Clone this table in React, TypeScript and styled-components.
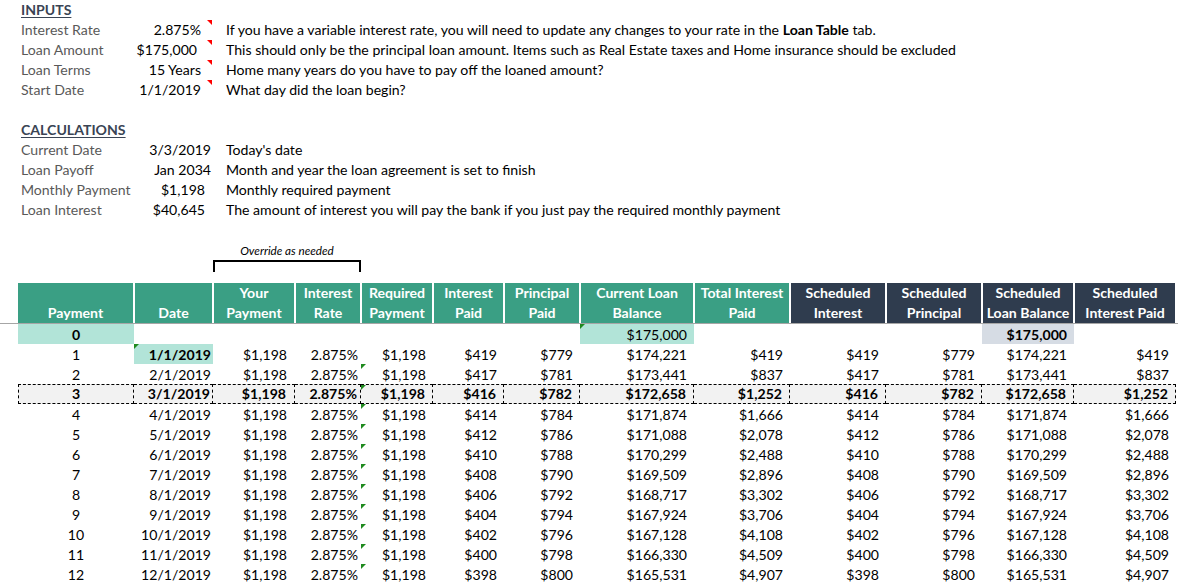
import React from "react";
import styled, { createGlobalStyle, css } from "styled-components";

const GlobalStyle = createGlobalStyle`
  html, body { margin: 0; padding: 0; background: #ffffff; }
  body {
    font-family: Lato, "Noto Sans", sans-serif;
    font-size: 14.1px;
    color: #000000;
  }
`;

const COLS =
  "18px 116px 79px 82px 66px 72px 71px 76px 114px 96px 96px 96px 92px 102px";

const TEAL = "#3a9f84";
const NAVY = "#2f3c4e";
const LIGHT_TEAL = "#b2e4d8";
const LIGHT_SLATE = "#d6dce4";

const Page = styled.div`
  width: 1178px;
  overflow: hidden;
`;

/* ---------- top info section ---------- */

const InfoRow = styled.div`
  display: grid;
  grid-template-columns: 18px 116px 79px 1fr;
  height: 20px;
  line-height: 20px;
  white-space: nowrap;
`;

const Title = styled.div`
  grid-column: 2 / span 2;
  padding-left: 3px;
  font-weight: 700;
  text-decoration: underline;
  text-underline-offset: 2px;
  color: #3a4454;
`;

const Label = styled.div`
  grid-column: 2;
  padding-left: 3px;
  color: #595959;
`;

const Value = styled.div<{ $pad: number }>`
  grid-column: 3;
  position: relative;
  text-align: right;
  padding-right: ${(p) => p.$pad}px;
`;

const Desc = styled.div`
  grid-column: 4;
  padding-left: 13px;
`;

const RedMark = styled.span`
  position: absolute;
  top: 0;
  right: 1px;
  width: 0;
  height: 0;
  border-top: 5px solid #ff0000;
  border-left: 5px solid transparent;
`;

const Spacer = styled.div`
  height: 20px;
`;

const OverrideRow = styled.div`
  display: grid;
  grid-template-columns: 213px 148px;
  height: 20px;
  line-height: 21px;
`;

const OverrideText = styled.div`
  grid-column: 2;
  text-align: center;
  font-style: italic;
  font-size: 11.7px;
`;

const BracketRow = styled.div`
  display: grid;
  grid-template-columns: 213px 148px;
  height: 23px;
`;

const Bracket = styled.div`
  grid-column: 2;
  box-sizing: border-box;
  height: 12px;
  border: 2px solid #000;
  border-bottom: none;
`;

/* ---------- table ---------- */

const HeaderRow = styled.div`
  display: grid;
  grid-template-columns: ${COLS};
  height: 40px;
  border-bottom: 1px solid #a6a6a6;
`;

const HeadCell = styled.div<{ $dark?: boolean; $first?: boolean }>`
  display: flex;
  flex-direction: column;
  justify-content: flex-end;
  align-items: center;
  background: ${(p) => (p.$dark ? NAVY : TEAL)};
  color: #ffffff;
  font-weight: 700;
  line-height: 20px;
  white-space: nowrap;
  border-left: ${(p) => (p.$first ? "0" : "1px solid #fff")};
  border-right: 1px solid #ffffff;
`;

const BodyRow = styled.div`
  display: grid;
  grid-template-columns: ${COLS};
  height: 20px;
  line-height: 21px;
  white-space: nowrap;
`;

const Cell = styled.div<{
  $pad?: number;
  $center?: boolean;
  $bg?: string;
  $bold?: boolean;
  $sel?: boolean;
  $first?: boolean;
}>`
  position: relative;
  box-sizing: border-box;
  height: 20px;
  text-align: ${(p) => (p.$center ? "center" : "right")};
  padding-right: ${(p) => (p.$center ? 0 : p.$pad ?? 7)}px;
  background: ${(p) => p.$bg ?? "transparent"};
  font-weight: ${(p) => (p.$bold ? 700 : 400)};
  ${(p) =>
    p.$sel &&
    css`
      background: #f2f2f2;
      font-weight: 700;
      border-top: 1px dashed #000;
      border-bottom: 1px dashed #000;
      border-right: 1px dashed #000;
      line-height: 18px;
      ${p.$first && "border-left: 1px dashed #000;"}
    `}
`;

const GreenMark = styled.span`
  position: absolute;
  top: 0;
  left: 0;
  width: 0;
  height: 0;
  border-top: 5px solid #1f8a1f;
  border-right: 5px solid transparent;
`;

type Row = {
  n: number;
  date: string;
  interest: string;
  principal: string;
  balance: string;
  total: string;
};

const rows: Row[] = [
  { n: 1, date: "1/1/2019", interest: "$419", principal: "$779", balance: "$174,221", total: "$419" },
  { n: 2, date: "2/1/2019", interest: "$417", principal: "$781", balance: "$173,441", total: "$837" },
  { n: 3, date: "3/1/2019", interest: "$416", principal: "$782", balance: "$172,658", total: "$1,252" },
  { n: 4, date: "4/1/2019", interest: "$414", principal: "$784", balance: "$171,874", total: "$1,666" },
  { n: 5, date: "5/1/2019", interest: "$412", principal: "$786", balance: "$171,088", total: "$2,078" },
  { n: 6, date: "6/1/2019", interest: "$410", principal: "$788", balance: "$170,299", total: "$2,488" },
  { n: 7, date: "7/1/2019", interest: "$408", principal: "$790", balance: "$169,509", total: "$2,896" },
  { n: 8, date: "8/1/2019", interest: "$406", principal: "$792", balance: "$168,717", total: "$3,302" },
  { n: 9, date: "9/1/2019", interest: "$404", principal: "$794", balance: "$167,924", total: "$3,706" },
  { n: 10, date: "10/1/2019", interest: "$402", principal: "$796", balance: "$167,128", total: "$4,108" },
  { n: 11, date: "11/1/2019", interest: "$400", principal: "$798", balance: "$166,330", total: "$4,509" },
  { n: 12, date: "12/1/2019", interest: "$398", principal: "$800", balance: "$165,531", total: "$4,907" },
];

const headers: { l1: string; l2: string; dark?: boolean }[] = [
  { l1: "", l2: "Payment" },
  { l1: "", l2: "Date" },
  { l1: "Your", l2: "Payment" },
  { l1: "Interest", l2: "Rate" },
  { l1: "Required", l2: "Payment" },
  { l1: "Interest", l2: "Paid" },
  { l1: "Principal", l2: "Paid" },
  { l1: "Current Loan", l2: "Balance" },
  { l1: "Total Interest", l2: "Paid" },
  { l1: "Scheduled", l2: "Interest", dark: true },
  { l1: "Scheduled", l2: "Principal", dark: true },
  { l1: "Scheduled", l2: "Loan Balance", dark: true },
  { l1: "Scheduled", l2: "Interest Paid", dark: true },
];

const inputs = [
  {
    label: "Interest Rate",
    value: "2.875%",
    pad: 12,
    desc: (
      <>
        If you have a variable interest rate, you will need to update any changes to your rate in the{" "}
        <b>Loan Table</b> tab.
      </>
    ),
  },
  {
    label: "Loan Amount",
    value: "$175,000",
    pad: 16,
    desc: "This should only be the principal loan amount. Items such as Real Estate taxes and Home insurance should be excluded",
  },
  { label: "Loan Terms", value: "15 Years", pad: 12, desc: "Home many years do you have to pay off the loaned amount?" },
  { label: "Start Date", value: "1/1/2019", pad: 12, desc: "What day did the loan begin?" },
];

const calcs = [
  { label: "Current Date", value: "3/3/2019", pad: 2, desc: "Today's date" },
  { label: "Loan Payoff", value: "Jan 2034", pad: 2, desc: "Month and year the loan agreement is set to finish" },
  { label: "Monthly Payment", value: "$1,198", pad: 8, desc: "Monthly required payment" },
  {
    label: "Loan Interest",
    value: "$40,645",
    pad: 8,
    desc: "The amount of interest you will pay the bank if you just pay the required monthly payment",
  },
];

export default function App() {
  return (
    <Page>
      <GlobalStyle />
      <InfoRow>
        <Title>INPUTS</Title>
      </InfoRow>
      {inputs.map((r) => (
        <InfoRow key={r.label}>
          <Label>{r.label}</Label>
          <Value $pad={r.pad}>
            {r.value}
            <RedMark />
          </Value>
          <Desc>{r.desc}</Desc>
        </InfoRow>
      ))}
      <Spacer />
      <InfoRow>
        <Title>CALCULATIONS</Title>
      </InfoRow>
      {calcs.map((r) => (
        <InfoRow key={r.label}>
          <Label>{r.label}</Label>
          <Value $pad={r.pad}>{r.value}</Value>
          <Desc>{r.desc}</Desc>
        </InfoRow>
      ))}
      <Spacer />
      <OverrideRow>
        <OverrideText>Override as needed</OverrideText>
      </OverrideRow>
      <BracketRow>
        <Bracket />
      </BracketRow>

      <HeaderRow>
        <div />
        {headers.map((h, i) => (
          <HeadCell key={i} $dark={h.dark} $first={i === 0}>
            <span>{h.l1 || "\u00a0"}</span>
            <span>{h.l2}</span>
          </HeadCell>
        ))}
      </HeaderRow>

      <BodyRow>
        <div />
        <Cell $center $bold $bg={LIGHT_TEAL}>0</Cell>
        <Cell />
        <Cell />
        <Cell />
        <Cell />
        <Cell />
        <Cell />
        <Cell $bg={LIGHT_TEAL}>
          <GreenMark />
          $175,000
        </Cell>
        <Cell />
        <Cell />
        <Cell />
        <Cell $bold $bg={LIGHT_SLATE}>$175,000</Cell>
        <Cell />
      </BodyRow>

      {rows.map((r) => {
        const sel = r.n === 3;
        return (
          <BodyRow key={r.n}>
            <div />
            <Cell $center $sel={sel} $first>{r.n}</Cell>
            <Cell
              $pad={2}
              $sel={sel}
              $bold={r.n === 1}
              $bg={r.n === 1 ? LIGHT_TEAL : undefined}
            >
              {r.n === 1 && <GreenMark />}
              {r.date}
            </Cell>
            <Cell $pad={8} $sel={sel}>$1,198</Cell>
            <Cell $pad={3} $sel={sel}>2.875%</Cell>
            <Cell $sel={sel}>
              {r.n >= 2 && <GreenMark />}
              $1,198
            </Cell>
            <Cell $sel={sel}>{r.interest}</Cell>
            <Cell $sel={sel}>{r.principal}</Cell>
            <Cell $sel={sel}>{r.balance}</Cell>
            <Cell $sel={sel}>{r.total}</Cell>
            <Cell $sel={sel}>{r.interest}</Cell>
            <Cell $sel={sel}>{r.principal}</Cell>
            <Cell $sel={sel}>{r.balance}</Cell>
            <Cell $sel={sel}>{r.total}</Cell>
          </BodyRow>
        );
      })}
    </Page>
  );
}
